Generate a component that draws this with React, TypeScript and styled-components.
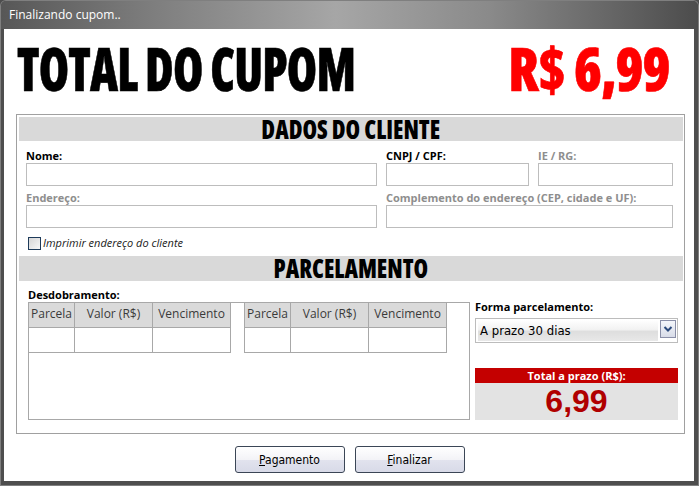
import styled, { createGlobalStyle } from "styled-components";

const GlobalStyle = createGlobalStyle`
  html, body {
    margin: 0;
    padding: 0;
    width: 699px;
    height: 486px;
    overflow: hidden;
    background: #4d4d4d;
  }
  * { box-sizing: border-box; }
`;

const Window = styled.div`
  width: 699px;
  height: 486px;
  display: flex;
  flex-direction: column;
  border: 1px solid #7f7f7f;
  border-bottom: none;
  border-radius: 6px 6px 0 0;
  overflow: hidden;
  background: #4e4e4e;
`;

const TitleBar = styled.div`
  height: 28px;
  flex: none;
  display: flex;
  align-items: center;
  padding: 0 0 1px 8px;
  background: linear-gradient(90deg, #575757 0%, #7e7e7e 22%, #a6a6a6 48%, #8a8a8a 70%, #4c4c4c 100%);
  color: #ffffff;
  font-family: "Open Sans", "Liberation Sans", sans-serif;
  font-size: 12px;
`;

const Frame = styled.div`
  flex: 1;
  display: flex;
  padding: 0 4px 5px 3px;
  background: #4e4e4e;
  box-shadow: inset 0 -1px 0 #808080;
`;

const Client = styled.div`
  flex: 1;
  display: flex;
  flex-direction: column;
  background: #ffffff;
`;

const Header = styled.div`
  height: 85px;
  display: flex;
  align-items: center;
  justify-content: space-between;
  padding: 0 25px 8px 13px;
`;

const BigText = styled.div<{ $red?: boolean; $sx: number }>`
  font-family: "Open Sans", "DejaVu Sans Condensed", sans-serif;
  font-weight: 800;
  font-stretch: 75%;
  font-size: 60px;
  line-height: 60px;
  letter-spacing: -1px;
  white-space: nowrap;
  -webkit-text-stroke: 0.6px currentColor;
  transform: scaleX(${(p) => p.$sx});
  transform-origin: ${(p) => (p.$red ? "right" : "left")} center;
  color: ${(p) => (p.$red ? "#ff0000" : "#000000")};
`;

const GroupBox = styled.div`
  height: 320px;
  margin: 0 9px 0 12px;
  border: 1px solid #a0a0a0;
  padding: 2px 1px 0 2px;
  display: flex;
  flex-direction: column;
`;

const SectionBar = styled.div<{ $h: number }>`
  height: ${(p) => p.$h}px;
  background: #d9d9d9;
  display: flex;
  align-items: center;
  justify-content: center;
  padding-bottom: 2px;
`;

const SectionTitle = styled.span`
  font-family: "Open Sans", "DejaVu Sans Condensed", sans-serif;
  font-weight: 800;
  font-stretch: 75%;
  font-size: 27px;
  line-height: 27px;
  color: #000;
  white-space: nowrap;
  transform: scaleX(0.87);
`;

const FieldGrid = styled.div`
  display: grid;
  grid-template-columns: 351px 143px 135px;
  column-gap: 9px;
  row-gap: 5px;
  padding: 8px 9px 0 7px;
`;

const Field = styled.div<{ $span?: number }>`
  display: flex;
  flex-direction: column;
  grid-column: span ${(p) => p.$span ?? 1};
`;

const Label = styled.div<{ $disabled?: boolean }>`
  height: 14px;
  font-family: "Open Sans", "Liberation Sans", sans-serif;
  font-weight: 700;
  font-size: 11px;
  line-height: 14px;
  color: ${(p) => (p.$disabled ? "#8e8e8e" : "#000")};
`;

const Input = styled.div`
  height: 23px;
  border: 1px solid #bdbdbd;
  background: #fff;
`;

const CheckRow = styled.div`
  display: flex;
  align-items: center;
  gap: 2px;
  padding: 8px 0 6px 9px;
  font-family: "Open Sans", "Liberation Sans", sans-serif;
  font-style: italic;
  font-size: 11px;
  line-height: 14px;
  color: #1a1a1a;
`;

const CheckBox = styled.span`
  width: 13px;
  height: 13px;
  border: 1px solid #1e3b5a;
  background: linear-gradient(135deg, #d6d6d6, #f8f8f8);
`;

const ParcelArea = styled.div`
  display: flex;
  gap: 5px;
  padding: 7px 0 0 9px;
`;

const LeftCol = styled.div`
  display: flex;
  flex-direction: column;
`;

const GridBox = styled.div`
  width: 442px;
  height: 118px;
  border: 1px solid #a8a8a8;
  display: flex;
  align-items: flex-start;
  gap: 13px;
`;

const Table = styled.div<{ $first?: boolean }>`
  display: grid;
  grid-template-columns: 46px 78px 78px;
  margin-top: -1px;
  border-left: ${(p) => (p.$first ? "none" : "1px solid #a8a8a8")};
  border-top: 1px solid #a8a8a8;
`;

const Cell = styled.div<{ $head?: boolean }>`
  height: 25px;
  border-right: 1px solid #a8a8a8;
  border-bottom: 1px solid #a8a8a8;
  background: ${(p) => (p.$head ? "#dadada" : "#fff")};
  display: flex;
  align-items: center;
  justify-content: center;
  padding-bottom: ${(p) => (p.$head ? "4px" : "0")};
  font-family: "Open Sans", "Liberation Sans", sans-serif;
  font-size: 12px;
  color: #3a3a3a;
`;

const RightCol = styled.div`
  width: 203px;
  display: flex;
  flex-direction: column;
  padding-top: 12px;
`;

const Select = styled.div`
  margin-top: 4px;
  height: 25px;
  border: 1px solid #bcbcbc;
  padding: 1px 1px 1px 2px;
  display: flex;
  gap: 2px;
`;

const SelectValue = styled.div`
  flex: 1;
  display: flex;
  align-items: center;
  padding-left: 2px;
  background: linear-gradient(180deg, #ffffff 0%, #f2f2f2 45%, #dedede 55%, #e8e8e8 100%);
  font-family: "DejaVu Sans Condensed", "Liberation Sans", sans-serif;
  font-size: 13px;
  color: #000;
`;

const SelectButton = styled.div`
  width: 16px;
  height: 18px;
  border: 1px solid #8a8fa8;
  background: linear-gradient(180deg, #f4f6fb, #d8dce8);
  display: flex;
  align-items: center;
  justify-content: center;
`;

const TotalHead = styled.div`
  margin-top: 25px;
  height: 15px;
  background: #c40000;
  color: #fff;
  font-family: "Open Sans", "Liberation Sans", sans-serif;
  font-weight: 700;
  font-size: 11px;
  line-height: 15px;
  text-align: center;
`;

const TotalValue = styled.div`
  height: 37px;
  background: #e3e3e3;
  color: #b00000;
  font-family: "Liberation Sans", Arial, sans-serif;
  font-weight: 700;
  font-size: 32px;
  line-height: 37px;
  text-align: center;
`;

const Footer = styled.div`
  display: flex;
  justify-content: center;
  gap: 10px;
  padding: 12px 0 0 1px;
`;

const Button = styled.button`
  width: 110px;
  height: 27px;
  border: 1px solid #3b4656;
  border-radius: 3px;
  background: linear-gradient(180deg, #ffffff 0%, #f3f3f7 50%, #e2e3ee 51%, #d8dae8 100%);
  font-family: "DejaVu Sans Condensed", "Liberation Sans", sans-serif;
  font-size: 12px;
  color: #000;
  padding: 0;
  u { text-decoration: underline; }
`;

const heads = ["Parcela", "Valor (R$)", "Vencimento"];

const ParcelTable = ({ first }: { first?: boolean }) => (
  <Table $first={first}>
    {heads.map((h) => (
      <Cell key={h} $head>{h}</Cell>
    ))}
    {heads.map((h) => (
      <Cell key={h + "r"} />
    ))}
  </Table>
);

export default function App() {
  return (
    <>
      <GlobalStyle />
      <Window>
        <TitleBar>Finalizando cupom..</TitleBar>
        <Frame>
          <Client>
            <Header>
              <BigText $sx={0.815}>TOTAL DO CUPOM</BigText>
              <BigText $red $sx={0.94}>R$ 6,99</BigText>
            </Header>
            <GroupBox>
              <SectionBar $h={24}>
                <SectionTitle>DADOS DO CLIENTE</SectionTitle>
              </SectionBar>
              <FieldGrid>
                <Field>
                  <Label>Nome:</Label>
                  <Input />
                </Field>
                <Field>
                  <Label>CNPJ / CPF:</Label>
                  <Input />
                </Field>
                <Field>
                  <Label $disabled>IE / RG:</Label>
                  <Input />
                </Field>
                <Field>
                  <Label $disabled>Endereço:</Label>
                  <Input />
                </Field>
                <Field $span={2}>
                  <Label $disabled>Complemento do endereço (CEP, cidade e UF):</Label>
                  <Input />
                </Field>
              </FieldGrid>
              <CheckRow>
                <CheckBox />
                Imprimir endereço do cliente
              </CheckRow>
              <SectionBar $h={25}>
                <SectionTitle>PARCELAMENTO</SectionTitle>
              </SectionBar>
              <ParcelArea>
                <LeftCol>
                  <Label>Desdobramento:</Label>
                  <GridBox>
                    <ParcelTable first />
                    <ParcelTable />
                  </GridBox>
                </LeftCol>
                <RightCol>
                  <Label>Forma parcelamento:</Label>
                  <Select>
                    <SelectValue>A prazo 30 dias</SelectValue>
                    <SelectButton>
                      <svg width="10" height="8" viewBox="0 0 10 8">
                        <path d="M1.5 2 L5 5.5 L8.5 2" fill="none" stroke="#2b4a7c" strokeWidth="2" />
                      </svg>
                    </SelectButton>
                  </Select>
                  <TotalHead>Total a prazo (R$):</TotalHead>
                  <TotalValue>6,99</TotalValue>
                </RightCol>
              </ParcelArea>
            </GroupBox>
            <Footer>
              <Button>
                <u>P</u>agamento
              </Button>
              <Button>
                <u>F</u>inalizar
              </Button>
            </Footer>
          </Client>
        </Frame>
      </Window>
    </>
  );
}
